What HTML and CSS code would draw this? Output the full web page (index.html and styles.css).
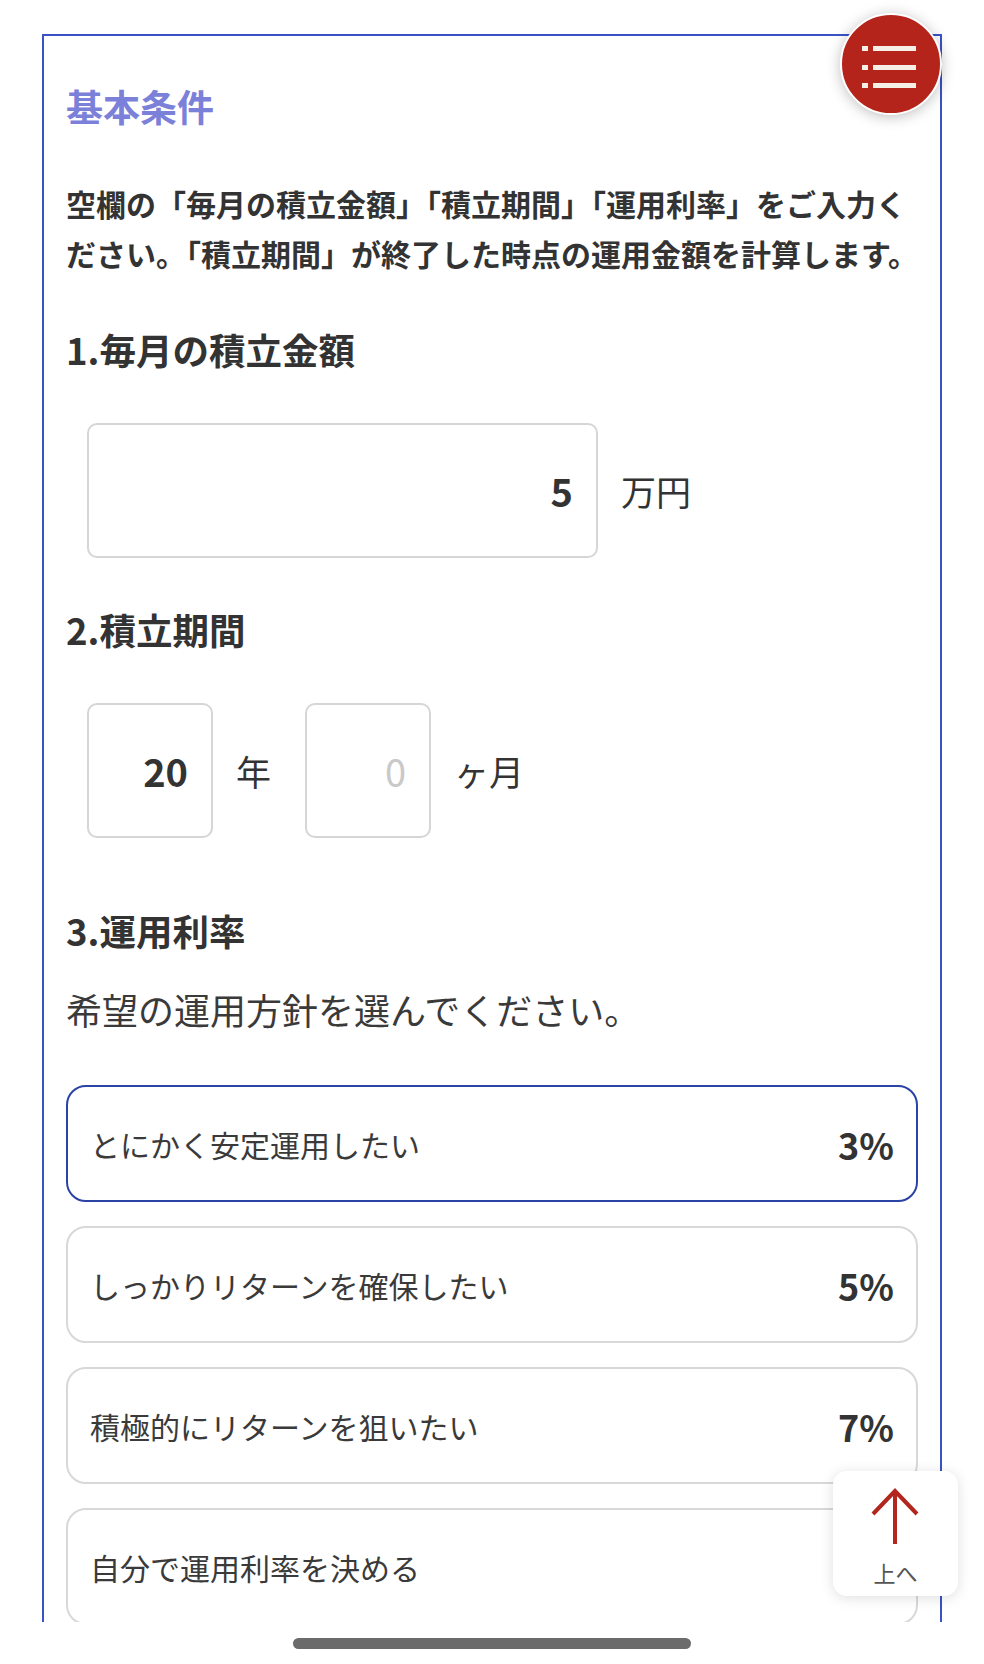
FILE: index.html
```html
<!DOCTYPE html>
<html lang="ja">
<head>
<meta charset="utf-8">
<title>基本条件</title>
<link rel="stylesheet" href="styles.css">
</head>
<body>
<div class="viewport">
  <section class="card">
    <h2 class="card-title">基本条件</h2>
    <p class="lead">空欄の「毎月の積立金額」「積立期間」「運用利率」をご入力ください。「積立期間」が終了した時点の運用金額を計算します。</p>

    <h3 class="q-title">1.毎月の積立金額</h3>
    <div class="field-row">
      <input class="num-input wide" type="text" value="5">
      <span class="unit">万円</span>
    </div>

    <h3 class="q-title q2">2.積立期間</h3>
    <div class="field-row">
      <input class="num-input small" type="text" value="20">
      <span class="unit">年</span>
      <input class="num-input small gap-left" type="text" placeholder="0">
      <span class="unit">ヶ月</span>
    </div>

    <h3 class="q-title q3">3.運用利率</h3>
    <p class="sub">希望の運用方針を選んでください。</p>

    <div class="options">
      <div class="option selected"><span class="opt-label">とにかく安定運用したい</span><span class="opt-rate">3%</span></div>
      <div class="option"><span class="opt-label">しっかりリターンを確保したい</span><span class="opt-rate">5%</span></div>
      <div class="option"><span class="opt-label">積極的にリターンを狙いたい</span><span class="opt-rate">7%</span></div>
      <div class="option"><span class="opt-label">自分で運用利率を決める</span></div>
    </div>
  </section>
</div>
<div class="home-area"><div class="home-bar"></div></div>

<button class="menu-btn" aria-label="メニュー">
  <svg class="menu-icon" width="102" height="102" viewBox="0 0 102 102">
    <rect x="22" y="33" width="6" height="5" fill="#f6efe8"/>
    <rect x="33" y="33" width="43" height="5" fill="#f6efe8"/>
    <rect x="22" y="52" width="6" height="5" fill="#f6efe8"/>
    <rect x="33" y="52" width="43" height="5" fill="#f6efe8"/>
    <rect x="22" y="70" width="6" height="5" fill="#f6efe8"/>
    <rect x="33" y="70" width="43" height="5" fill="#f6efe8"/>
  </svg>
</button>

<a class="to-top" href="#">
  <svg class="to-top-icon" width="125" height="80" viewBox="0 0 125 80">
    <path d="M62 20 L62 73" stroke="#b3261e" stroke-width="4" fill="none"/>
    <path d="M40 43 L62 20 L84 43" stroke="#b3261e" stroke-width="4" fill="none" stroke-linejoin="miter"/>
  </svg>
  <span class="to-top-label">上へ</span>
</a>
</body>
</html>
```

FILE: styles.css
```css
* { box-sizing: border-box; }
html, body { margin: 0; padding: 0; background: #ffffff; }
body {
  width: 984px;
  height: 1664px;
  overflow: hidden;
  position: relative;
  font-family: "Noto Sans CJK JP", "Noto Sans", sans-serif;
  color: #333333;
}
.viewport {
  height: 1622px;
  overflow: hidden;
  padding: 34px 0 0 42px;
}
.card {
  width: 900px;
  min-height: 1700px;
  border: 2px solid #3a52c6;
  padding: 45px 22px 0 22px;
}
.card-title {
  margin: 0;
  font-size: 37px;
  line-height: 50px;
  font-weight: 700;
  color: #7b80d8;
}
.lead {
  margin: 47px 0 0 0;
  font-size: 30px;
  line-height: 50px;
  font-weight: 700;
  color: #333333;
}
.q-title {
  margin: 47px 0 0 0;
  font-size: 36.5px;
  line-height: 50px;
  font-weight: 700;
  color: #333333;
}
.q-title.q3 { margin-top: 68px; }
.field-row {
  display: flex;
  align-items: center;
  margin-top: 48px;
  padding-left: 21px;
}
.num-input {
  height: 135px;
  border: 2px solid #d6d6d6;
  border-radius: 10px;
  background: #ffffff;
  font-family: "Noto Sans CJK JP", "Noto Sans", sans-serif;
  font-size: 38px;
  font-weight: 700;
  color: #333333;
  text-align: right;
  padding: 0 23px 0 10px;
  outline: none;
  margin: 0;
}
.num-input::placeholder {
  color: #c9c9c9;
  font-weight: 400;
}
.num-input.wide { width: 511px; }
.num-input.small { width: 126px; }
.num-input.gap-left { margin-left: 34px; }
.unit {
  margin-left: 23px;
  font-size: 35px;
  line-height: 50px;
  font-weight: 400;
  color: #333333;
}
.sub {
  margin: 28px 0 0 0;
  font-size: 36px;
  line-height: 50px;
  font-weight: 400;
  color: #3a3a3a;
}
.options {
  margin-top: 51px;
  display: flex;
  flex-direction: column;
  gap: 24px;
}
.option {
  height: 117px;
  border: 2px solid #d8d8d8;
  border-radius: 20px;
  display: flex;
  align-items: center;
  justify-content: space-between;
  padding: 0 22px 0 22px;
}
.option.selected { border-color: #2c43a6; }
.opt-label {
  font-size: 30px;
  line-height: 40px;
  color: #3a3a3a;
}
.opt-rate {
  font-size: 36px;
  font-weight: 700;
  line-height: 40px;
  color: #333333;
}
.home-area {
  height: 42px;
  display: flex;
  justify-content: center;
  padding-top: 16px;
}
.home-bar {
  width: 398px;
  height: 11px;
  border-radius: 6px;
  background: #6b6b6b;
}
.menu-btn {
  position: absolute;
  left: 840px;
  top: 13px;
  width: 102px;
  height: 102px;
  border-radius: 50%;
  background: #b5241b;
  border: 2px solid #ffffff;
  box-shadow: 0 2px 14px rgba(0, 0, 0, 0.25);
  padding: 0;
  cursor: pointer;
}
.menu-icon {
  position: absolute;
  left: -2px;
  top: -2px;
  display: block;
}
.to-top {
  position: absolute;
  left: 833px;
  top: 1471px;
  width: 125px;
  height: 125px;
  border-radius: 14px;
  background: #ffffff;
  box-shadow: 0 2px 14px rgba(0, 0, 0, 0.13);
  text-decoration: none;
  display: flex;
  flex-direction: column;
  align-items: center;
}
.to-top-icon { display: block; }
.to-top-label {
  display: block;
  margin-top: 8px;
  font-size: 22px;
  line-height: 26px;
  color: #555555;
}
```
